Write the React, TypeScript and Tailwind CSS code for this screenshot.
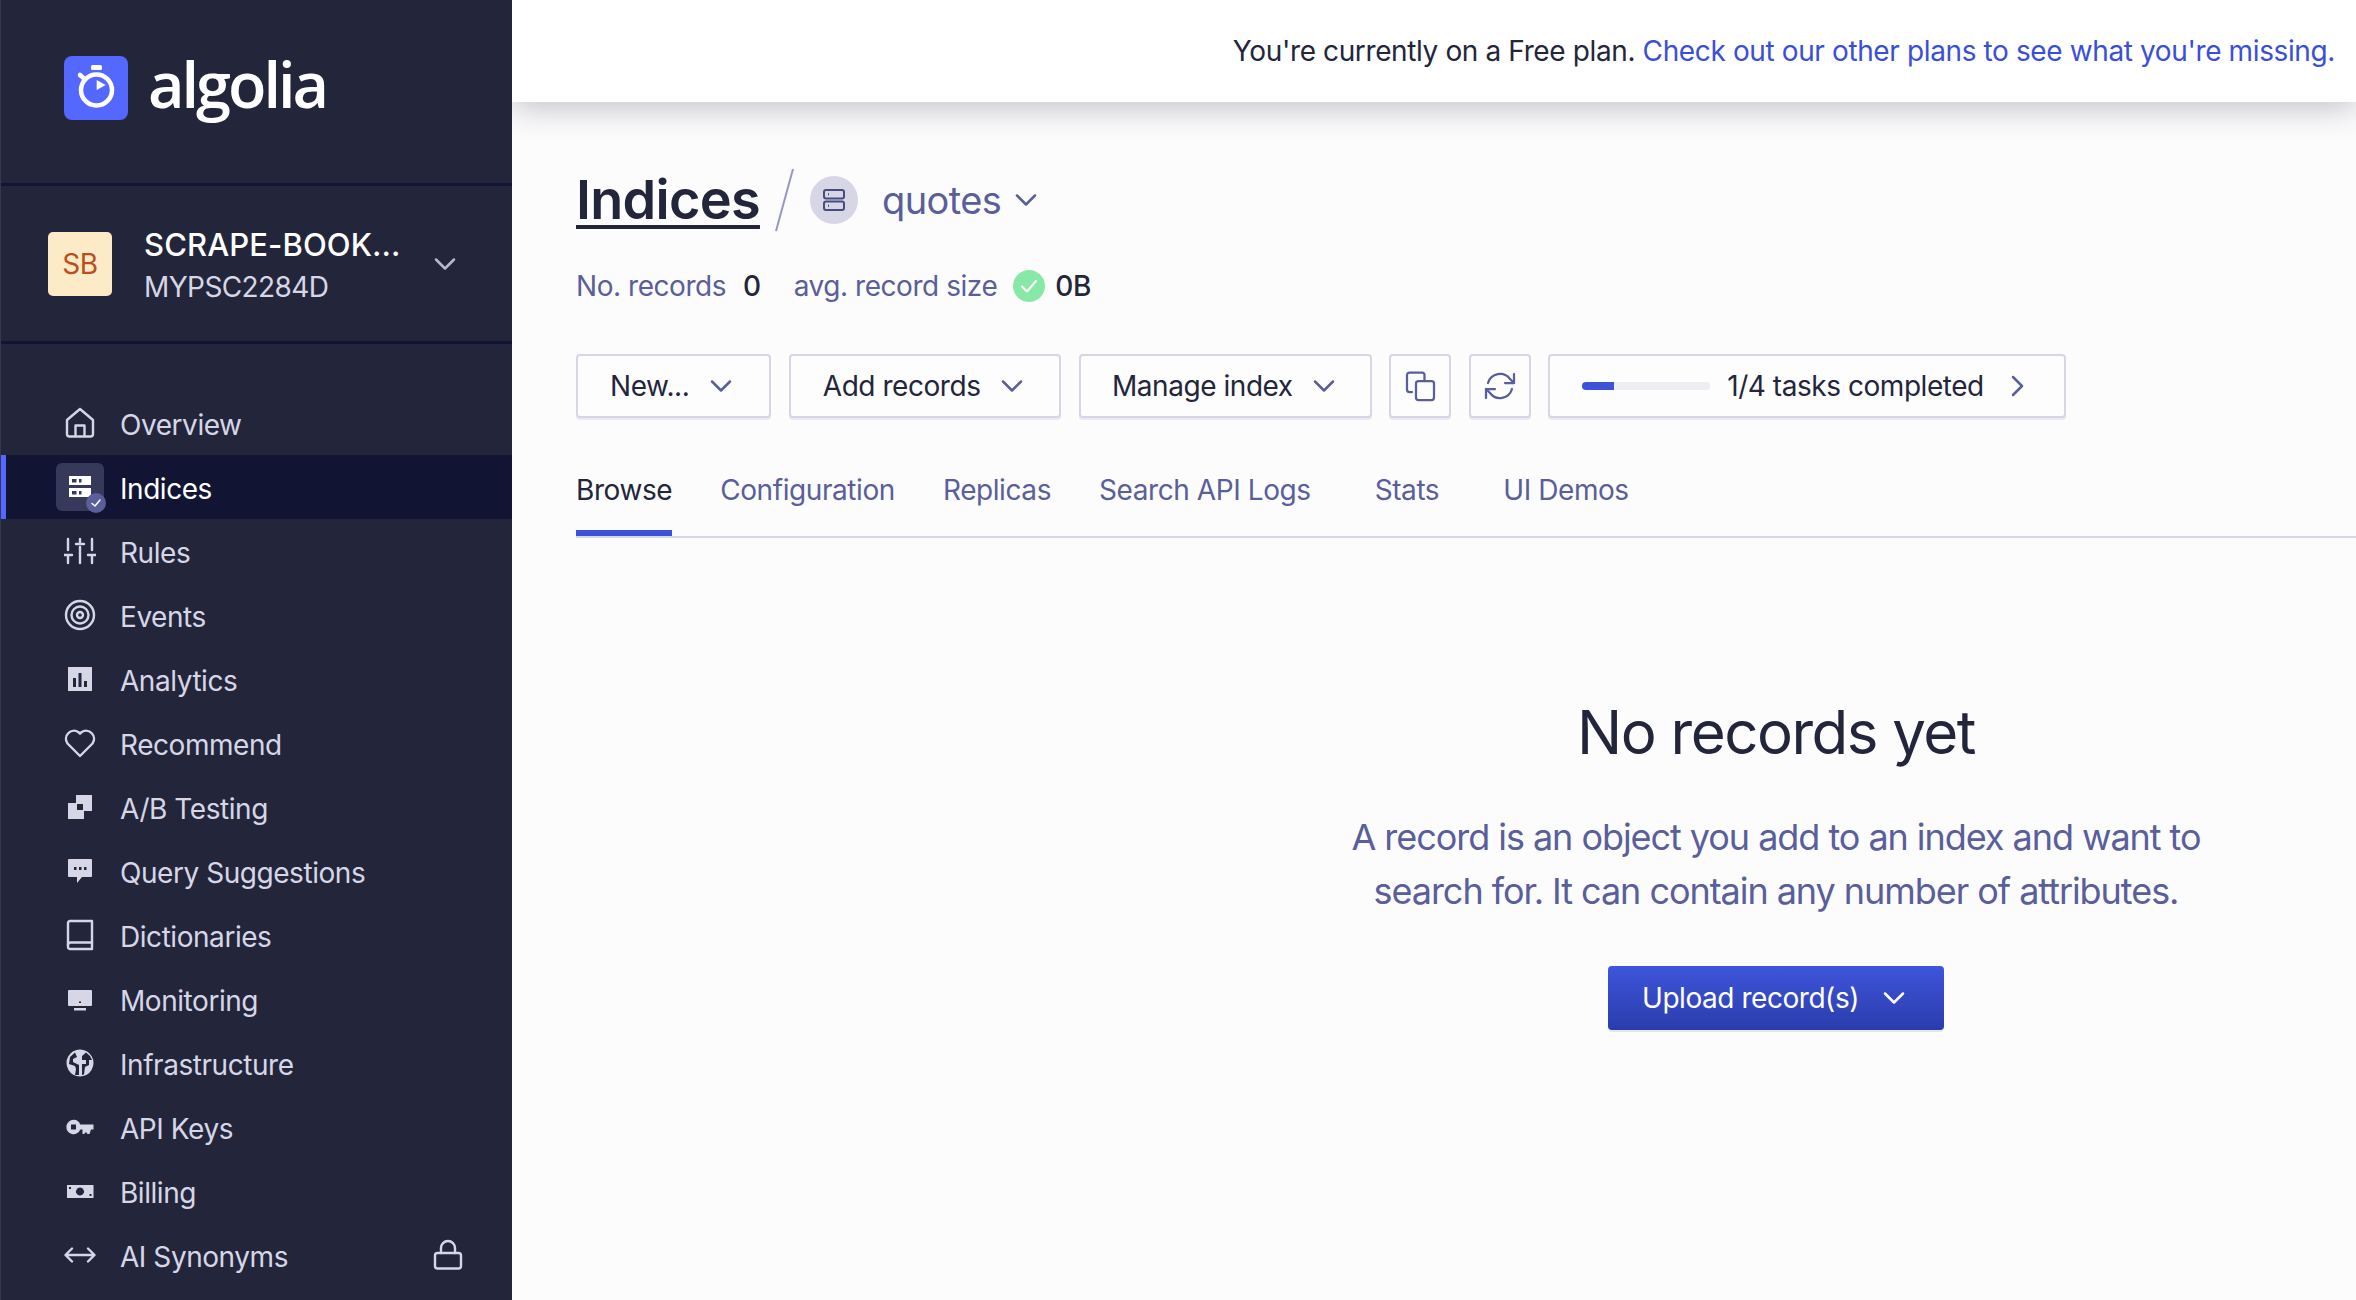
import type { ReactNode } from "react";

const font = { fontFamily: "Inter, 'Liberation Sans', sans-serif" };

function Line({ children }: { children: ReactNode }) {
    return (
        <svg viewBox="0 0 32 32" className="w-8 h-8 shrink-0" fill="none" stroke="#d6d6e7" strokeWidth={2.4} strokeLinecap="round" strokeLinejoin="round">
            {children}
        </svg>
    );
}

function Solid({ children }: { children: ReactNode }) {
    return (
        <svg viewBox="0 0 32 32" className="w-8 h-8 shrink-0" fill="#d6d6e7" fillRule="evenodd">
            {children}
        </svg>
    );
}

const navItems: { label: string; icon: ReactNode; active?: boolean; locked?: boolean }[] = [
    {
        label: "Overview",
        icon: (
            <Line>
                <path d="M16 2 L29 13 V27 a2.5 2.5 0 0 1 -2.5 2.5 H5.500 a2.500 2.500 0 0 1 -2.500 -2.500 V13 Z" />
                <path d="M11.500 29 V18.500 H20.500 V29" />
            </Line>
        ),
    },
    {
        label: "Indices",
        active: true,
        icon: (
            <svg viewBox="0 0 32 32" className="w-8 h-8 shrink-0" fill="#fff" fillRule="evenodd">
                <path d="M5 5 H27 V14 H5 Z M8 8 V11.500 H12.500 V8 Z M15 8 V11.500 H17.500 V8 Z" />
                <path d="M5 17 H27 V26 H5 Z M8 20 V23.500 H12.500 V20 Z M15 20 V23.500 H17.500 V20 Z" />
            </svg>
        ),
    },
    {
        label: "Rules",
        icon: (
            <Line>
                <path d="M4 4 V15 M4 20 V28 M0.500 20 H8 M16 4 V7 M12 9 H20 M16 12 V28 M28 4 V15 M28 20 V28 M24 20 H31.500" />
            </Line>
        ),
    },
    {
        label: "Events",
        icon: (
            <Line>
                <circle cx="16" cy="16" r="14" />
                <circle cx="16" cy="16" r="8.500" />
                <circle cx="16" cy="16" r="3" />
            </Line>
        ),
    },
    {
        label: "Analytics",
        icon: (
            <Solid>
                <path d="M4 4 H28 V28 H4 Z M9 15 V24 H12 V15 Z M14.500 10 V24 H17.500 V10 Z M20 18 V24 H23 V18 Z" />
            </Solid>
        ),
    },
    {
        label: "Recommend",
        icon: (
            <Line>
                <path d="M16 29 L3.500 16.500 A8 8 0 0 1 14.500 5.200 L16 6.700 L17.500 5.200 A8 8 0 0 1 28.500 16.500 Z" />
            </Line>
        ),
    },
    {
        label: "A/B Testing",
        icon: (
            <Solid>
                <path d="M12 4 H28 V20 H20 V28 H4 V12 H12 Z M13 13 V19 H19 V13 Z" />
            </Solid>
        ),
    },
    {
        label: "Query Suggestions",
        icon: (
            <Solid>
                <path d="M5 4 H27 a1 1 0 0 1 1 1 V21 a1 1 0 0 1 -1 1 H18 L13 28 V22 H5 a1 1 0 0 1 -1 -1 V5 a1 1 0 0 1 1 -1 Z M10 12 V15 H12.500 V12 Z M15 12 V15 H17.500 V12 Z M20 12 V15 H22.500 V12 Z" />
            </Solid>
        ),
    },
    {
        label: "Dictionaries",
        icon: (
            <Line>
                <path d="M6 2 H28 V30 H6 a2 2 0 0 1 -2 -2 V4 a2 2 0 0 1 2 -2 Z" />
                <path d="M4 26 a2.500 2.500 0 0 1 2.500 -2.500 H28" />
            </Line>
        ),
    },
    {
        label: "Monitoring",
        icon: (
            <Solid>
                <path d="M5 7 H27 a1 1 0 0 1 1 1 V22 a1 1 0 0 1 -1 1 H5 a1 1 0 0 1 -1 -1 V8 a1 1 0 0 1 1 -1 Z M15 18.500 V20 H17 V18.500 Z" />
                <path d="M10 25 H22 V27.500 H10 Z" />
            </Solid>
        ),
    },
    {
        label: "Infrastructure",
        icon: (
            <Solid>
                <path d="M16 2.500 A13.500 13.500 0 1 1 15.990 2.500 Z M11 5.500 L6 10 L5 17 L11 19 L12 22 L11 28 L15 28 L15 18 L9 15 L9 12 L13 10 Z M18 9 L18 13 L22 13 L22 17 L18 17 L18 28 L20 27.500 L21 20 L25 18 L25 13 L28 13 L26 9 L22 5.500 Z" />
            </Solid>
        ),
    },
    {
        label: "API Keys",
        icon: (
            <Solid>
                <path d="M9.500 8.800 A7.200 7.200 0 0 1 16.300 13.500 H29.500 V18.500 H27 L25.500 23 H23.500 L22 21 L20 23 H18.500 V18.500 H16.300 A7.200 7.200 0 1 1 9.500 8.800 Z M7 13.500 V18.500 H12 V13.500 Z" />
            </Solid>
        ),
    },
    {
        label: "Billing",
        icon: (
            <Solid>
                <path d="M3 10 H29.500 V23 H3 Z M16 12.500 A4 4 0 1 0 16.010 12.500 Z M5 12 V14 H7 V12 Z M25.500 19 V21 H27.500 V19 Z" />
            </Solid>
        ),
    },
    {
        label: "AI Synonyms",
        icon: (
            <Line>
                <path d="M2 16 H30 M8 9.500 L1.500 16 L8 22.500 M24 9.500 L30.500 16 L24 22.500" />
            </Line>
        ),
        locked: true,
    },
];

function Chevron({ color = "#5a5e9a" }: { color?: string }) {
    return (
        <svg viewBox="0 0 32 32" className="w-8 h-8 shrink-0" fill="none" stroke={color} strokeWidth={2.500} strokeLinecap="round" strokeLinejoin="round">
            <path d="M7 11.500 L16 20.500 L25 11.500" />
        </svg>
    );
}

function Sidebar() {
    return (
        <aside className="w-[512px] shrink-0 h-[1300px] bg-[#23263b] border-l border-[#34374f] overflow-hidden relative z-20">
            <div className="h-[186px] border-b-[3px] border-[#111432] pl-[63px] pt-[56px] flex items-start gap-[20px]">
                <svg viewBox="0 0 64 64" className="w-16 h-16 shrink-0">
                    <rect width="64" height="64" rx="8" fill="#5468ff" />
                    <rect x="27" y="9" width="11" height="5" rx="1.500" fill="#fff" />
                    <path d="M16 19 L20 22.500" stroke="#fff" strokeWidth="4.500" strokeLinecap="round" />
                    <circle cx="32.500" cy="34" r="15.500" fill="none" stroke="#fff" strokeWidth="4.500" />
                    <path d="M32.700 24 L41.700 29 L32.700 34 Z" fill="#fff" />
                </svg>
                <span className="text-[63px] leading-[56px] font-semibold text-white tracking-[-3px]" style={{ fontFamily: "'Open Sans', sans-serif" }}>algolia</span>
            </div>
            <div className="h-[158px] border-b-[3px] border-[#111432] pl-[47px] flex items-center">
                <div className="w-16 h-16 rounded-[5px] bg-[#fdebc8] text-[#b84f1f] text-[28px] tracking-[-0.4px] flex items-center justify-center shrink-0">SB</div>
                <div className="ml-[32px] w-[285px] pt-[4px]">
                    <div className="text-[31px] leading-[42px] font-medium text-white tracking-[0.1px]">SCRAPE-BOOK...</div>
                    <div className="text-[28px] leading-[42px] text-[#d6d6e7] tracking-[-0.6px]">MYPSC2284D</div>
                </div>
                <Chevron color="#b6b7d5" />
            </div>
            <nav className="mt-[47px]">
                {navItems.map((item) => (
                    <div key={item.label} className={`relative h-16 flex items-center pl-[63px] pr-[48px] gap-6 text-[28px] tracking-[-0.45px] ${item.active ? "bg-[#111432] text-white" : "text-[#d6d6e7]"}`}>
                        {item.active && <span className="absolute left-0 top-0 bottom-0 w-[5px] bg-[#5468ff]" />}
                        {item.active && <span className="absolute left-[55px] top-2 w-12 h-12 rounded-md bg-[#36395a]" />}
                        <span className="relative flex">{item.icon}</span>
                        {item.active && (
                            <span className="absolute left-[85px] top-[38px] w-5 h-5 rounded-full bg-[#5a5e9a] flex items-center justify-center">
                                <svg viewBox="0 0 20 20" className="w-5 h-5" fill="none" stroke="#fff" strokeWidth={1.500} strokeLinecap="round" strokeLinejoin="round">
                                    <path d="M6 10.500 L9 13 L14 7" />
                                </svg>
                            </span>
                        )}
                        <span className="relative pt-[3px]">{item.label}</span>
                        {item.locked && (
                            <span className="ml-auto flex">
                                <Line>
                                    <rect x="3" y="14" width="26" height="15.500" rx="2.500" />
                                    <path d="M9 14 V9 a7 7 0 0 1 14 0 V14" />
                                </Line>
                            </span>
                        )}
                    </div>
                ))}
            </nav>
        </aside>
    );
}

function ActionButton({ children }: { children: ReactNode }) {
    return (
        <button className="h-16 border-2 border-[#d6d6e7] rounded-[4px] shadow-[0_2px_0_rgba(214,214,231,0.5)] bg-[#fdfdfe] flex items-center justify-center text-[28px] tracking-[-0.45px] text-[#23263b] shrink-0">
            {children}
        </button>
    );
}

const tabs = [
    { label: "Browse", active: true, className: "mr-12" },
    { label: "Configuration", className: "mr-12" },
    { label: "Replicas", className: "mr-12" },
    { label: "Search API Logs", className: "mr-16" },
    { label: "Stats", className: "mr-16" },
    { label: "UI Demos", className: "" },
];

function Main() {
    return (
        <main className="flex-1 min-w-0 h-[1300px] bg-[#fcfcfd] overflow-hidden">
            <div className="relative z-10 h-[102px] bg-white shadow-[0_4px_34px_rgba(35,38,59,0.3)] flex items-center justify-end pr-[21px] text-[28px] tracking-[-0.38px] text-[#23263b] whitespace-nowrap">
                <span>You're currently on a Free plan.&nbsp;</span>
                <span className="text-[#3a4fd8]">Check out our other plans to see what you're missing.</span>
            </div>
            <div className="pl-16">
                <div className="mt-[74px] h-12 flex items-center">
                    <span className="text-[54px] leading-[48px] font-semibold tracking-[-0.7px] text-[#23263b] underline decoration-[4px] underline-offset-[6px]">Indices</span>
                    <svg viewBox="0 0 20 64" className="w-5 h-16 ml-[15px] shrink-0" fill="none" stroke="#9698c3" strokeWidth={2}>
                        <path d="M18 1 L1 63" />
                    </svg>
                    <span className="ml-[15px] w-12 h-12 rounded-full bg-[#d6d6e7] flex items-center justify-center shrink-0">
                        <svg viewBox="0 0 32 32" className="w-8 h-8" fill="none" stroke="#484c7a" strokeWidth={2}>
                            <rect x="6" y="6" width="20" height="8.500" rx="2" />
                            <rect x="6" y="17.500" width="20" height="8.500" rx="2" />
                            <path d="M10 10.200 H11 M10 21.800 H11" />
                        </svg>
                    </span>
                    <span className="ml-6 text-[38px] tracking-[-0.6px] text-[#5a5e9a]">quotes</span>
                    <span className="ml-[9px] flex"><Chevron /></span>
                </div>
                <div className="mt-[46px] h-8 flex items-center text-[28px] tracking-[-0.45px] whitespace-nowrap">
                    <span className="text-[#5a5e9a]">No. records</span>
                    <span className="ml-[17px] font-medium text-[#23263b]">0</span>
                    <span className="ml-[33px] text-[#5a5e9a]">avg. record size</span>
                    <span className="ml-4 w-8 h-8 rounded-full bg-[#88e9a6] flex items-center justify-center shrink-0">
                        <svg viewBox="0 0 32 32" className="w-8 h-8" fill="none" stroke="#fff" strokeWidth={2} strokeLinecap="round" strokeLinejoin="round">
                            <path d="M9 16.500 L14 21.500 L23 11" />
                        </svg>
                    </span>
                    <span className="ml-[10px] font-medium text-[#23263b]">0B</span>
                </div>
                <div className="mt-[52px] flex items-center gap-[17.5px]">
                    <ActionButton>
                        <span className="pl-[32px]">New...</span>
                        <span className="ml-[16px] mr-[32px] flex"><Chevron /></span>
                    </ActionButton>
                    <ActionButton>
                        <span className="pl-[32px]">Add records</span>
                        <span className="ml-[16px] mr-[31px] flex"><Chevron /></span>
                    </ActionButton>
                    <ActionButton>
                        <span className="pl-[31px]">Manage index</span>
                        <span className="ml-[15px] mr-[30px] flex"><Chevron /></span>
                    </ActionButton>
                    <ActionButton>
                        <span className="w-[58px] flex justify-center">
                            <svg viewBox="0 0 32 32" className="w-8 h-8" fill="none" stroke="#5a5e9a" strokeWidth={2.250} strokeLinecap="round" strokeLinejoin="round">
                                <rect x="12" y="11" width="18" height="19" rx="2.500" />
                                <path d="M8 22 H5.500 a2.500 2.500 0 0 1 -2.500 -2.500 V5 a2.500 2.500 0 0 1 2.500 -2.500 H18 a2.500 2.500 0 0 1 2.500 2.500 V11" />
                            </svg>
                        </span>
                    </ActionButton>
                    <ActionButton>
                        <span className="w-[58px] flex justify-center">
                            <svg viewBox="0 0 32 32" className="w-8 h-8" fill="none" stroke="#5a5e9a" strokeWidth={2.250} strokeLinecap="round" strokeLinejoin="round">
                                <path d="M4 13 A12.500 12.500 0 0 1 26 9 L30 13" />
                                <path d="M30 4 V13 H21" />
                                <path d="M28 19 A12.500 12.500 0 0 1 6 23 L2 19" />
                                <path d="M2 28 V19 H11" />
                            </svg>
                        </span>
                    </ActionButton>
                    <ActionButton>
                        <span className="ml-[32px] w-32 h-2 rounded-full bg-[#ededf3] overflow-hidden flex">
                            <span className="w-8 h-2 bg-[#3d52d8]" />
                        </span>
                        <span className="ml-[17px]">1/4 tasks completed</span>
                        <svg viewBox="0 0 32 32" className="w-8 h-8 ml-[17px] mr-[31px] shrink-0" fill="none" stroke="#5a5e9a" strokeWidth={2.500} strokeLinecap="round" strokeLinejoin="round">
                            <path d="M12 7 L21 16 L12 25" />
                        </svg>
                    </ActionButton>
                </div>
                <div className="mt-[30px] h-[90px] border-b-2 border-[#d6d6e7] flex text-[28px] tracking-[-0.42px] whitespace-nowrap">
                    {tabs.map((tab) => (
                        <div key={tab.label} className={`relative h-[88px] flex items-center pb-[4px] ${tab.className} ${tab.active ? "text-[#23263b]" : "text-[#5a5e9a]"}`}>
                            {tab.label}
                            {tab.active && <span className="absolute left-0 right-0 bottom-0 h-[6px] bg-[#3d52d8]" />}
                        </div>
                    ))}
                </div>
                <div className="w-[2400px] flex flex-col items-center pt-[160px]">
                    <h2 className="text-[60px] leading-[68px] tracking-[-1.5px] text-[#23263b]">No records yet</h2>
                    <p className="mt-[44px] text-[36px] leading-[54px] tracking-[-1.05px] text-[#5a5e9a] text-center">
                        A record is an object you add to an index and want to
                        <br />
                        search for. It can contain any number of attributes.
                    </p>
                    <button className="mt-[48px] h-16 w-[336px] rounded-[4px] bg-gradient-to-b from-[#3f55db] to-[#2a3cac] shadow-[0_2px_0_rgba(214,214,231,0.6)] text-white text-[28px] tracking-[-0.45px] flex items-center justify-center gap-[19px]">
                        <span>Upload record(s)</span>
                        <Chevron color="#ffffff" />
                    </button>
                </div>
            </div>
        </main>
    );
}

export default function App() {
    return (
        <div className="w-[2356px] h-[1300px] flex overflow-hidden" style={font}>
            <Sidebar />
            <Main />
        </div>
    );
}
